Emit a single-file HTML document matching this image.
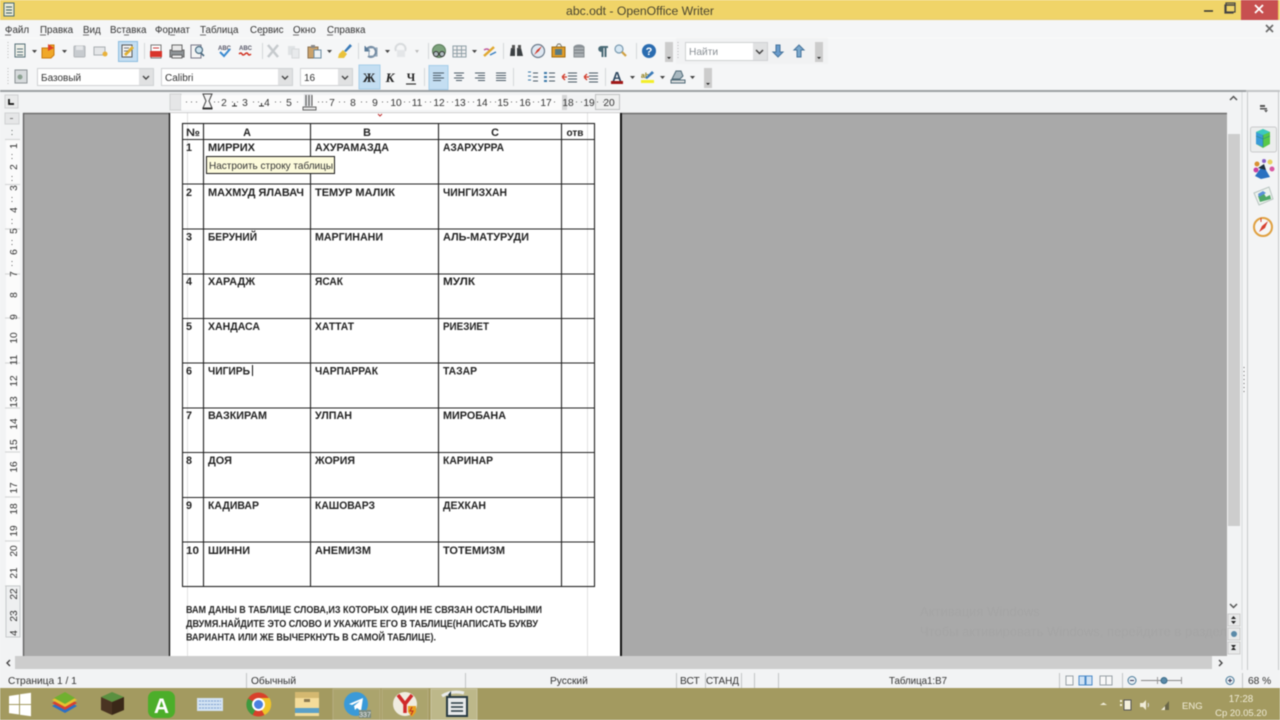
<!DOCTYPE html>
<html><head><meta charset="utf-8"><style>
html,body{margin:0;padding:0;width:1280px;height:720px;overflow:hidden;background:#f5f6f7;font-family:"Liberation Sans",sans-serif}
svg text{font-family:"Liberation Sans",sans-serif}
.a{position:absolute}
</style></head><body>
<svg class="a" style="left:0;top:0;filter:blur(.5px)" width="1280" height="720" viewBox="0 0 1280 720">
<!-- title bar -->
<rect width="1280" height="20" fill="#f0d468"/>
<rect y="19" width="1280" height="1" fill="#e8cd70"/>
<text x="640" y="15" font-size="12.2" text-anchor="middle" fill="#4a4530">abc.odt - OpenOffice Writer</text>
<g><rect x="4" y="3" width="10" height="13" fill="#e8ead8" stroke="#4a6a70"/><path d="M6 7h6M6 10h6M6 13h6" stroke="#3a5a60"/></g>
<path d="M1204 11h9" stroke="#333" stroke-width="1.5"/>
<rect x="1225" y="5" width="8" height="8" fill="none" stroke="#444" stroke-width="1.2"/><rect x="1226" y="3" width="9" height="9" fill="#f0d468" stroke="#444" stroke-width="1.2"/><path d="M1226 5h9" stroke="#444" stroke-width="1.5"/>
<rect x="1241" y="0" width="37" height="20" fill="#c75050"/>
<path d="M1255 5l8 8M1263 5l-8 8" stroke="#fff" stroke-width="1.8"/>
<!-- menu -->
<g font-size="9.8" fill="#333">
<text x="5" y="33">Файл</text><text x="40" y="33">Правка</text><text x="83" y="33">Вид</text><text x="110" y="33">Вставка</text><text x="155" y="33">Формат</text><text x="200" y="33">Таблица</text><text x="250" y="33">Сервис</text><text x="293" y="33">Окно</text><text x="327" y="33">Справка</text>
</g>
<path d="M5 35h6M40 35h6M83 35h6M124 35h5M170 35h5M200 35h6M260 35h5M293 35h6M327 35h6" stroke="#444" stroke-width=".7"/>
<path d="M1266 25l7 7M1273 25l-7 7" stroke="#666" stroke-width="1.6"/>
<path d="M0 38h1280" stroke="#fafafa"/>
<!-- toolbar 1 -->
<path d="M8 42v18M8 68v18" stroke="#bbb" stroke-dasharray="1 2"/>
<g>
<rect x="15" y="44" width="10" height="13" fill="#eef0e8" stroke="#56707a"/><path d="M17 49h6M17 52h6M17 55h6" stroke="#56707a"/>
<path d="M32 50h5l-2.500 3z" fill="#444"/>
<path d="M42 48h6l2-3h4v10l-3 3H42z" fill="#f0a828" stroke="#c97a10"/><path d="M48 44l6 4-6 3z" fill="#e0402a"/>
<path d="M62 50h5l-2.500 3z" fill="#444"/>
<rect x="74" y="46" width="11" height="11" rx="1" fill="#c7cbcf" stroke="#b0b4b8"/><rect x="76" y="46" width="7" height="4" fill="#e4e6e8"/>
<rect x="94" y="47" width="11" height="8" fill="#e4e6e8" stroke="#a8aeb2"/><circle cx="105" cy="54" r="2.500" fill="#e9b23c"/>
<rect x="118.500" y="41.500" width="19" height="20" fill="#c4def2" stroke="#8cbce0"/>
<rect x="122" y="45" width="10" height="12" fill="#f2f2f2" stroke="#555"/><path d="M124 54l8-8 2 2-8 8z" fill="#e0b030"/><path d="M124 48h5M124 51h4" stroke="#777"/>
<path d="M144.500 43v16M262.500 43v16M358.500 43v16M428.500 43v16M503.500 43v16M636.500 43v16" stroke="#d5d8da"/>
<rect x="151" y="45" width="10" height="13" fill="#fff" stroke="#777"/><rect x="150" y="51" width="12" height="6" fill="#d8342a"/><path d="M153 48h6" stroke="#c33"/>
<rect x="170" y="50" width="14" height="7" fill="#8d9396" stroke="#666"/><rect x="172" y="45" width="10" height="6" fill="#e8e8e8" stroke="#666"/><rect x="172" y="55" width="10" height="3" fill="#eee" stroke="#666"/>
<rect x="191" y="45" width="10" height="13" fill="#f4f4f4" stroke="#778"/><circle cx="199" cy="50" r="3.500" fill="#cde3ee" stroke="#4a6a80" stroke-width="1.200"/><path d="M201 53l3 3" stroke="#4a6a80" stroke-width="1.600"/>
<text x="218" y="50" font-size="6" font-weight="bold" fill="#556">ABC</text><path d="M220 52l4 4 6-7" fill="none" stroke="#3a8ad0" stroke-width="2"/>
<text x="239" y="50" font-size="6" font-weight="bold" fill="#556">ABC</text><path d="M239 54q2-2 3 0t3 0 3 0 3 0" fill="none" stroke="#d03020" stroke-width="1.500"/>
<path d="M268 45l10 12M278 45l-10 12" stroke="#c6cacd" stroke-width="2.500"/>
<rect x="288" y="46" width="7" height="9" fill="#dfe2e4"/><rect x="292" y="49" width="7" height="9" fill="#e8eaec" stroke="#d6d8da"/>
<rect x="308" y="47" width="10" height="11" fill="#caa26a" stroke="#8a7050"/><rect x="311" y="45" width="4" height="3" fill="#888"/><rect x="314" y="50" width="7" height="8" fill="#eef3f5" stroke="#6a8aa0"/>
<path d="M327 50h5l-2.500 3z" fill="#444"/>
<path d="M339 54l4-4 4 4-3 4q-4 0-6 0z" fill="#e9c23c"/><path d="M344 51l6-7 2 2-6 6z" fill="#3a7ab8"/>
<path d="M366 51a5 5 0 1 1 2 5" fill="none" stroke="#7088a0" stroke-width="2"/><path d="M365 46v5h5" fill="#5a7a98" stroke="#5a7a98"/><rect x="369" y="48" width="8" height="8" fill="none" stroke="#8aa0b4"/>
<path d="M385 50h5l-2.500 3z" fill="#444"/>
<path d="M396 51a5 5 0 1 1 9 0" fill="none" stroke="#d7dadc" stroke-width="2"/><rect x="397" y="50" width="8" height="7" fill="#e4e6e8"/>
<path d="M415 50h4l-2 3z" fill="#bbb"/>
<circle cx="439" cy="51" r="6.500" fill="#7ca27c" stroke="#5a7a5a"/><circle cx="436" cy="54" r="2.500" fill="#b0bcc0" stroke="#333"/><circle cx="442" cy="54" r="2.500" fill="#b0bcc0" stroke="#333"/>
<rect x="453" y="46" width="13" height="11" fill="#f0f0f0" stroke="#90a0a8"/><path d="M453 50h13M453 53.500h13M457 46v11M461.500 46v11" stroke="#90a0a8"/>
<path d="M472 50h5l-2.500 3z" fill="#444"/>
<path d="M484 56l10-9" stroke="#e0a830" stroke-width="2.500"/><path d="M484 50q3-2 5 0" stroke="#c05a9a" fill="none" stroke-width="1.500"/><path d="M490 55l6-3" stroke="#3a80c0" stroke-width="1.500"/>
<path d="M511 48h4v8h-5zM517 48h4l2 8h-6z" fill="#3a3f42"/><rect x="512" y="45" width="3" height="4" fill="#555"/><rect x="518" y="45" width="3" height="4" fill="#555"/>
<circle cx="538" cy="51" r="6.500" fill="#dfe8f2" stroke="#6a7a8a" stroke-width="1.200"/><path d="M534 55l3-5 5-4-3 5z" fill="#d03a2a"/>
<rect x="552" y="47" width="13" height="10" fill="#e09c28" stroke="#a06c10"/><rect x="555" y="49" width="7" height="6" fill="#5a7a80"/><path d="M556 47l2-3h2l2 3" fill="none" stroke="#776"/>
<ellipse cx="579" cy="46.500" rx="5" ry="2" fill="#8a9298"/><rect x="574" y="47" width="10" height="10" fill="#a8aeb2" stroke="#868c90"/><path d="M574 50h10M574 53h10" stroke="#7a8084"/>
<path d="M601 46h7v2h-1.500v9h-2v-9h-1v9h-2v-5a3 3 0 0 1 -.5-6z" fill="#4a6a76"/>
<circle cx="619" cy="49" r="4" fill="#d7e8f4" stroke="#7a9ab0" stroke-width="1.200"/><path d="M622 52l4 4" stroke="#d0a040" stroke-width="2.200"/>
<circle cx="649" cy="51" r="7" fill="#2a6cb0"/><text x="649" y="55" font-size="11" font-weight="bold" text-anchor="middle" fill="#fff">?</text>
</g>
<rect x="665" y="42" width="8" height="20" fill="#ccc"/><path d="M667 57h4l-2 2z" fill="#222"/>
<rect x="676" y="38" width="152" height="26" fill="#f1f2f3"/>
<path d="M678 42v18" stroke="#bbb" stroke-dasharray="1 2"/>
<rect x="685.500" y="42.500" width="82" height="18" fill="#fff" stroke="#cfd1d3"/>
<rect x="753" y="43" width="14" height="17" fill="#e0e1e2"/><path d="M756 50l3.500 3.500 3.500-3.500" fill="none" stroke="#444" stroke-width="1.500"/>
<text x="689" y="55" font-size="10.200" fill="#8a9095">Найти</text>
<path d="M778 57l-5-5h3v-7h4v7h3z" fill="#6a9ccc" stroke="#46749c"/>
<path d="M799 45l-5 5h3v7h4v-7h3z" fill="#7aa8cc" stroke="#46749c"/>
<rect x="815" y="42" width="8" height="20" fill="#ccc"/><path d="M817 57h4l-2 2z" fill="#222"/>
<!-- toolbar 2 -->
<rect x="15" y="70" width="12" height="13" fill="#d6dadc" stroke="#8a9094"/><circle cx="20" cy="77" r="2.500" fill="#8aa090"/>
<g fill="#fff" stroke="#cfd1d3">
<rect x="37.500" y="68.500" width="116" height="17"/><rect x="161.500" y="68.500" width="131" height="17"/><rect x="300.500" y="68.500" width="52" height="17"/></g>
<g fill="#e0e1e2"><rect x="139" y="69" width="14" height="16"/><rect x="278" y="69" width="14" height="16"/><rect x="338" y="69" width="14" height="16"/></g>
<path d="M143 76l3 3 3-3M282 76l3 3 3-3M342 76l3 3 3-3" fill="none" stroke="#444" stroke-width="1.400"/>
<g font-size="10" fill="#333"><text x="41" y="81">Базовый</text><text x="165" y="81">Calibri</text><text x="304" y="81">16</text></g>
<rect x="359" y="65" width="21" height="24" fill="#c4def2"/><rect x="359" y="65" width="21" height="24" fill="none" stroke="#a6cdea"/>
<text x="369" y="82" font-size="12.500" font-weight="bold" text-anchor="middle" style="font-family:'Liberation Serif',serif" fill="#222">Ж</text>
<text x="390" y="82" font-size="13" font-weight="bold" font-style="italic" text-anchor="middle" style="font-family:'Liberation Serif',serif" fill="#222">К</text>
<text x="411" y="81" font-size="11.500" font-weight="bold" text-anchor="middle" style="font-family:'Liberation Serif',serif" fill="#222">Ч</text>
<path d="M406 84h10" stroke="#333" stroke-width="1.200"/>
<path d="M424.500 68v18M513.500 68v18M605.500 68v18" stroke="#d5d8da"/>
<rect x="429" y="65.500" width="19" height="24" fill="#c4def2" stroke="#a6cdea"/>
<g stroke="#4a5a66"><path d="M433 73h11M433 75.500h8M433 78h11M433 80.500h8"/><path d="M454 73h10M456 75.500h6M454 78h10M456 80.500h6"/><path d="M475 73h10M478 75.500h7M475 78h10M478 80.500h7"/><path d="M496 73h10M496 75.500h10M496 78h10M496 80.500h10"/></g>
<g stroke="#4a5a66"><path d="M528 72h3M528 76h3M528 80h3" stroke="#3a78a8"/><path d="M533 73h5M533 77h5M533 81h5"/><path d="M544 73h3M544 77h3M544 81h3" stroke="#3a78a8" stroke-width="2"/><path d="M549 73h6M549 77h6M549 81h6"/><path d="M568 73h9M568 76h9M568 79h9M568 82h9"/><path d="M589 73h9M589 76h9M589 79h9M589 82h9"/></g>
<path d="M562 77h5M562 77l3-3M562 77l3 3M584 77h5M584 77l3-3M584 77l3 3" stroke="#d03a2a" fill="none" stroke-width="1.300"/>
<text x="617" y="81" font-size="13" font-weight="bold" text-anchor="middle" fill="#304a62">A</text><rect x="611" y="81" width="12" height="3" fill="#a01818"/>
<path d="M630 76h5l-2.500 3z" fill="#444"/>
<text x="641" y="78" font-size="7" font-weight="bold" fill="#8a7a10">ab</text><path d="M645 78l7-7 2 2-7 6z" fill="#3a7ab8"/><rect x="641" y="80" width="13" height="3" fill="#f3ee2a"/>
<path d="M660 76h5l-2.500 3z" fill="#444"/>
<path d="M672 79l4-8h5l2 5-3 3z" fill="#a8b8c0" stroke="#506a78"/><rect x="671" y="80" width="14" height="3" fill="#d8dcdc" stroke="#506a78"/>
<path d="M690 76h5l-2.500 3z" fill="#444"/>
<rect x="704" y="68" width="8" height="20" fill="#ccc"/><path d="M706 83h4l-2 2z" fill="#222"/>
<!-- separator above ruler -->
<rect y="90" width="1246" height="2" fill="#9ca0a3"/>
<rect x="1246" y="90" width="34" height="2" fill="#c2c4c6"/>
<!-- ruler area -->
<rect y="92" width="1246" height="21" fill="#f2f3f4"/>
<rect x="5" y="95" width="13" height="13" fill="#e9eaea" stroke="#cfd1d2"/>
<path d="M9 99v5h5" fill="none" stroke="#111" stroke-width="1.700"/>
<rect x="170" y="94" width="11" height="16" fill="#e5e6e7" stroke="#d0d2d3"/>
<rect x="181" y="95" width="383" height="15" fill="#fbfbfb"/>
<rect x="562" y="95" width="5" height="15" fill="#d4d5d6"/>
<rect x="595.500" y="94.500" width="24" height="15" fill="#eff0f0" stroke="#bfc1c2"/>
<rect x="304" y="94" width="8" height="16" fill="#dcdde0"/>
<g font-size="10.200" fill="#333" text-anchor="middle">
<text x="224" y="106">2</text><text x="245" y="106">3</text><text x="267" y="106">4</text><text x="289" y="106">5</text><text x="332" y="106">7</text><text x="353" y="106">8</text><text x="375" y="106">9</text><text x="396" y="106">10</text><text x="417" y="106">11</text><text x="439" y="106">12</text><text x="460" y="106">13</text><text x="482" y="106">14</text><text x="503" y="106">15</text><text x="525" y="106">16</text><text x="546" y="106">17</text><text x="568" y="106">18</text><text x="589" y="106">19</text><text x="609" y="106">20</text>
</g>
<path d="M186 102h1M191 102h1M196 102h1M214 102h1M218 102h1M232 102h1M237 102h1M253 102h1M258 102h1M275 102h1M280 102h1M297 102h1M318 102h1M322 102h1M326 102h1M339 102h1M344 102h1M361 102h1M366 102h1M382 102h1M387 102h1M404 102h1M409 102h1M425 102h1M430 102h1M447 102h1M452 102h1M468 102h1M473 102h1M490 102h1M495 102h1M511 102h1M516 102h1M533 102h1M538 102h1M554 102h1M576 102h1M581 102h1M597 102h1M603 102h1" stroke="#666"/>
<path d="M203 94h9l-3 7 3 7h-9l3-7z" fill="#f5f5f5" stroke="#444"/>
<path d="M202.500 108.500h10" stroke="#333" stroke-width="2"/>
<path d="M232 106h5M259 106h5" stroke="#333"/><path d="M234.500 103v3M261.500 103v3" stroke="#333"/>
<path d="M306 95v11M309 95v11M312 95v11" stroke="#555"/><path d="M303 107h13v3h-13z" fill="#e8e8e8" stroke="#666"/>
<!-- vertical ruler -->
<rect y="113" width="23" height="543" fill="#f2f3f4"/>
<rect x="5" y="113" width="14" height="11" fill="#e5e6e7" stroke="#cfd1d2"/><path d="M10 118.500h3" stroke="#777"/>
<rect x="6" y="140" width="14" height="497" fill="#fbfbfb"/>
<path d="M5 139.500h15M5 184.500h15M5 229h15M5 274h15M5 318h15M5 363h15M5 408h15M5 452h15M5 497h15M5 541h15M5 586h15" stroke="#d6d7d8" stroke-width="1.200"/>
<rect x="6" y="586" width="14" height="51" fill="#eeeff0" stroke="#c8cacb"/>
<g font-size="10.200" fill="#333" text-anchor="middle">
<text transform="translate(17,146) rotate(-90)">1</text><text transform="translate(17,167) rotate(-90)">2</text><text transform="translate(17,188) rotate(-90)">3</text><text transform="translate(17,210) rotate(-90)">4</text><text transform="translate(17,231) rotate(-90)">5</text><text transform="translate(17,252) rotate(-90)">6</text><text transform="translate(17,274) rotate(-90)">7</text><text transform="translate(17,295) rotate(-90)">8</text><text transform="translate(17,317) rotate(-90)">9</text><text transform="translate(17,338) rotate(-90)">10</text><text transform="translate(17,360) rotate(-90)">11</text><text transform="translate(17,381) rotate(-90)">12</text><text transform="translate(17,402) rotate(-90)">13</text><text transform="translate(17,424) rotate(-90)">14</text><text transform="translate(17,445) rotate(-90)">15</text><text transform="translate(17,467) rotate(-90)">16</text><text transform="translate(17,488) rotate(-90)">17</text><text transform="translate(17,509) rotate(-90)">18</text><text transform="translate(17,531) rotate(-90)">19</text><text transform="translate(17,551) rotate(-90)">20</text><text transform="translate(17,573) rotate(-90)">21</text><text transform="translate(17,594) rotate(-90)">22</text><text transform="translate(17,616) rotate(-90)">23</text><text transform="translate(17,633) rotate(-90)">4</text>
</g>
<path d="M12 130v1M12 134v1M12 154v1M12 158v1M12 176v1M12 180v1M12 197v1M12 201v1M12 219v1M12 223v1M12 240v1M12 244v1M12 261v1M12 265v1" stroke="#666"/>
<!-- doc bg -->
<rect x="23" y="113" width="1204" height="543" fill="#a9a9a9"/>
<path d="M23 113.500h1204" stroke="#6f6f6f" stroke-width="1.500"/><path d="M23.500 113v543" stroke="#5f5f5f" stroke-width="1.300"/>
<rect x="170" y="113" width="451" height="543" fill="#fff"/>
<path d="M169.500 113v543" stroke="#111" stroke-width="1.300"/>
<rect x="620" y="113" width="2" height="543" fill="#111"/>
<path d="M187.500 113v543M587.500 113v543" stroke="#e2e2e2"/>
<path d="M378 114l2 2 2-2" stroke="#c03030" fill="none"/>
<!-- faint watermark -->
<g fill="#a5a5a5" font-size="13"><text x="920" y="616">Активация Windows</text><text x="920" y="636">Чтобы активировать Windows, перейдите в раздел</text></g>
<!-- table -->
<g stroke="#222" stroke-width="1.100" fill="none">
<rect x="182.500" y="123.500" width="412" height="463"/>
<path d="M182 139.500h413M182 184h413M182 229h413M182 274h413M182 318.500h413M182 363h413M182 408h413M182 452.500h413M182 497.500h413M182 542h413"/>
<path d="M203.500 123v463M310.500 123v463M438.500 123v463M561.500 123v463"/>
</g>
<g font-size="10.800" font-weight="bold" fill="#242424">
<text x="186" y="136" textLength="14" lengthAdjust="spacingAndGlyphs">№</text>
<text x="247" y="136" text-anchor="middle">А</text><text x="367" y="136" text-anchor="middle">В</text><text x="495" y="136" text-anchor="middle">С</text><text x="575" y="136" text-anchor="middle" font-size="10">отв</text>
<text x="186" y="151">1</text><text x="208" y="151" textLength="47" lengthAdjust="spacingAndGlyphs">МИРРИХ</text><text x="315" y="151" textLength="74" lengthAdjust="spacingAndGlyphs">АХУРАМАЗДА</text><text x="443" y="151" textLength="61" lengthAdjust="spacingAndGlyphs">АЗАРХУРРА</text>
<text x="186" y="196">2</text><text x="208" y="196" textLength="96" lengthAdjust="spacingAndGlyphs">МАХМУД ЯЛАВАЧ</text><text x="315" y="196" textLength="80" lengthAdjust="spacingAndGlyphs">ТЕМУР МАЛИК</text><text x="443" y="196" textLength="64" lengthAdjust="spacingAndGlyphs">ЧИНГИЗХАН</text>
<text x="186" y="240.500">3</text><text x="208" y="240.500" textLength="49" lengthAdjust="spacingAndGlyphs">БЕРУНИЙ</text><text x="315" y="240.500" textLength="68" lengthAdjust="spacingAndGlyphs">МАРГИНАНИ</text><text x="443" y="240.500" textLength="86" lengthAdjust="spacingAndGlyphs">АЛЬ-МАТУРУДИ</text>
<text x="186" y="285">4</text><text x="208" y="285" textLength="47" lengthAdjust="spacingAndGlyphs">ХАРАДЖ</text><text x="315" y="285" textLength="28" lengthAdjust="spacingAndGlyphs">ЯСАК</text><text x="443" y="285" textLength="32" lengthAdjust="spacingAndGlyphs">МУЛК</text>
<text x="186" y="330">5</text><text x="208" y="330" textLength="52" lengthAdjust="spacingAndGlyphs">ХАНДАСА</text><text x="315" y="330" textLength="39" lengthAdjust="spacingAndGlyphs">ХАТТАТ</text><text x="443" y="330" textLength="46" lengthAdjust="spacingAndGlyphs">РИЕЗИЕТ</text>
<text x="186" y="374.500">6</text><text x="208" y="374.500" textLength="42" lengthAdjust="spacingAndGlyphs">ЧИГИРЬ</text><text x="315" y="374.500" textLength="63" lengthAdjust="spacingAndGlyphs">ЧАРПАРРАК</text><text x="443" y="374.500" textLength="34" lengthAdjust="spacingAndGlyphs">ТАЗАР</text>
<text x="186" y="419">7</text><text x="208" y="419" textLength="59" lengthAdjust="spacingAndGlyphs">ВАЗКИРАМ</text><text x="315" y="419" textLength="37" lengthAdjust="spacingAndGlyphs">УЛПАН</text><text x="443" y="419" textLength="63" lengthAdjust="spacingAndGlyphs">МИРОБАНА</text>
<text x="186" y="464">8</text><text x="208" y="464" textLength="24" lengthAdjust="spacingAndGlyphs">ДОЯ</text><text x="315" y="464" textLength="40" lengthAdjust="spacingAndGlyphs">ЖОРИЯ</text><text x="443" y="464" textLength="50" lengthAdjust="spacingAndGlyphs">КАРИНАР</text>
<text x="186" y="509">9</text><text x="208" y="509" textLength="51" lengthAdjust="spacingAndGlyphs">КАДИВАР</text><text x="315" y="509" textLength="60" lengthAdjust="spacingAndGlyphs">КАШОВАРЗ</text><text x="443" y="509" textLength="43" lengthAdjust="spacingAndGlyphs">ДЕХКАН</text>
<text x="186" y="554" textLength="13" lengthAdjust="spacingAndGlyphs">10</text><text x="208" y="554" textLength="42" lengthAdjust="spacingAndGlyphs">ШИННИ</text><text x="315" y="554" textLength="56" lengthAdjust="spacingAndGlyphs">АНЕМИЗМ</text><text x="443" y="554" textLength="62" lengthAdjust="spacingAndGlyphs">ТОТЕМИЗМ</text>
<text x="186" y="613" font-size="10" textLength="356" lengthAdjust="spacingAndGlyphs">ВАМ ДАНЫ В ТАБЛИЦЕ СЛОВА,ИЗ КОТОРЫХ ОДИН НЕ СВЯЗАН ОСТАЛЬНЫМИ</text>
<text x="186" y="627" font-size="10" textLength="352" lengthAdjust="spacingAndGlyphs">ДВУМЯ.НАЙДИТЕ ЭТО СЛОВО И УКАЖИТЕ ЕГО В ТАБЛИЦЕ(НАПИСАТЬ БУКВУ</text>
<text x="186" y="640.500" font-size="10" textLength="250" lengthAdjust="spacingAndGlyphs">ВАРИАНТА ИЛИ ЖЕ ВЫЧЕРКНУТЬ В САМОЙ ТАБЛИЦЕ).</text>
</g>
<path d="M252.500 365v11" stroke="#111"/>
<!-- tooltip -->
<rect x="206.500" y="156.500" width="128" height="17" fill="#fdfbdc" stroke="#1a1a1a"/>
<text x="209" y="169" font-size="10.500" fill="#333" textLength="124" lengthAdjust="spacingAndGlyphs">Настроить строку таблицы</text>
<!-- scrollbars -->
<rect x="1227" y="113" width="14" height="543" fill="#f2f3f4"/>
<rect x="1228" y="134" width="12" height="392" fill="#cdcdcd"/>
<path d="M1230 100l3.500-3.500 3.500 3.500" fill="none" stroke="#555" stroke-width="1.500"/>
<path d="M1230 604l3.500 3.500 3.500-3.500" fill="none" stroke="#555" stroke-width="1.500"/>
<rect x="1228" y="614" width="12" height="12" fill="#e8e9ea" stroke="#ccc"/><path d="M1231 619h5l-2.500-3zM1231 621h5l-2.500 3z" fill="#222"/>
<rect x="1228" y="628" width="12" height="12" fill="#e8e9ea" stroke="#ccc"/><circle cx="1234" cy="634" r="3" fill="#5a8aa8"/>
<rect x="1228" y="642" width="12" height="12" fill="#e8e9ea" stroke="#ccc"/><path d="M1231 645h5l-2.500 3zM1231 650h5l-2.500-3z" fill="#222"/>
<rect y="656" width="1241" height="14" fill="#f2f3f4"/>
<rect x="15" y="656" width="1197" height="13" fill="#cdcdcd"/>
<path d="M10 660l-3 3 3 3M1219 660l3 3-3 3" fill="none" stroke="#444" stroke-width="1.400"/>
<!-- right sidebar -->
<rect x="1241" y="92" width="39" height="578" fill="#f3f4f5"/>
<path d="M1247.500 92v578M1278.500 92v578" stroke="#c7c9cb"/><path d="M1242 92v578" stroke="#d8dadb"/>
<path d="M1260 105h5v2h-5zM1260 108h7v1.500h-7zM1264 110h4l-2 2.500z" fill="#555"/>
<rect x="1250.500" y="127" width="26" height="25" rx="2" fill="#eceded" stroke="#c9cbcc"/>
<path d="M1256 132l7-3 7 3v12l-7 4-7-4z" fill="#58c848"/><path d="M1256 132l7 3v12l-7-3z" fill="#3a9ad8"/><path d="M1263 129l7 3-7 3-7-3z" fill="#3cc8c0"/><path d="M1256 136l7 3M1263 135v12M1270 136l-7 3" stroke="#2a8a80" stroke-width=".6" fill="none"/>
<path d="M1255 176l8-11 7 12-9 2z" fill="#2a70c0"/><circle cx="1257" cy="164" r="2.500" fill="#d89030"/><circle cx="1270" cy="162" r="2.500" fill="#e8d060"/><circle cx="1272" cy="169" r="2.500" fill="#d858a0"/><circle cx="1256" cy="170" r="2.500" fill="#c840a0"/><circle cx="1264" cy="161" r="2" fill="#8860c8"/><path d="M1258 168l6-4 2 6z" fill="#203040"/>
<path d="M1254 193l15-6 4 12-14 6z" fill="#eef2ee" stroke="#b8c4c0"/><path d="M1258 196l5-4 3 5 4-2 1 4-11 3z" fill="#50a868"/><path d="M1258 194l5-3 3 2-7 4z" fill="#5a90d8"/>
<circle cx="1263" cy="227" r="9" fill="#f6f6f6" stroke="#e0a040" stroke-width="2"/><path d="M1259 232l3-6 6-5-3 7z" fill="#d84030"/><path d="M1261 218v4" stroke="#d84030"/>
<path d="M1244 367v1M1244 371v1M1244 375v1M1244 379v1M1244 383v1M1244 387v1M1244 391v1" stroke="#666"/>
<!-- status bar -->
<rect y="670" width="1280" height="18" fill="#f2f3f4"/>
<g font-size="10.200" fill="#333">
<text x="8" y="684">Страница  1 / 1</text><text x="251" y="684">Обычный</text><text x="550" y="684">Русский</text><text x="680" y="684">ВСТ</text><text x="706" y="684" textLength="33" lengthAdjust="spacingAndGlyphs">СТАНД</text><text x="889" y="684" textLength="58" lengthAdjust="spacingAndGlyphs">Таблица1:B7</text><text x="1248" y="684">68 %</text>
</g>
<path d="M246.500 673v15M465.500 673v15M676.500 673v15M705.500 673v15M741.500 673v15M754.500 673v15M778.500 673v15M1059.500 673v15M1122.500 673v15M1242.500 673v15" stroke="#c2c4c6"/>
<rect x="1066" y="676" width="7" height="9" fill="#f8f8f8" stroke="#98a0a6"/>
<rect x="1079" y="676" width="6" height="9" fill="#cfe2f4" stroke="#4a8ac8"/><rect x="1086" y="676" width="6" height="9" fill="#cfe2f4" stroke="#4a8ac8"/>
<rect x="1100" y="676" width="6" height="9" fill="#f8f8f8" stroke="#98a0a6"/><rect x="1106" y="676" width="6" height="9" fill="#f8f8f8" stroke="#98a0a6"/>
<circle cx="1132" cy="680.500" r="4" fill="#e8eef2" stroke="#4a7a9a"/><path d="M1130 680.500h4" stroke="#335"/>
<path d="M1141 680.500h41" stroke="#888"/><path d="M1157.500 677v7M1181.500 677v7" stroke="#999"/>
<circle cx="1164" cy="680.500" r="3" fill="#5a8aa8" stroke="#3a6a88"/>
<circle cx="1230" cy="680.500" r="4" fill="#e8eef2" stroke="#4a7a9a"/><path d="M1228 680.500h4M1230 678.500v4" stroke="#335"/>
<!-- taskbar -->
<rect y="688" width="1280" height="32" fill="#a39a60"/>
<rect x="333" y="689" width="47" height="31" fill="#aba46d" stroke="#b6ad80"/>
<rect x="382" y="689" width="46" height="31" fill="#aba46d" stroke="#b6ad80"/>
<rect x="431" y="689" width="46" height="31" fill="#bdb88a" stroke="#c8c4a0"/>
<path d="M9 696l10-1.500v9.500H9zM20 694.300l11-1.600v11.300H20zM9 705h10v9.500l-10-1.400zM20 705h11v11.300l-11-1.600z" fill="#fff"/>
<path d="M52 706l13-7 12 7-12 7z" fill="#2a70c8"/><path d="M52 703l13-7 12 7-12 7z" fill="#d84030"/><path d="M52 700l13-7 12 7-12 7z" fill="#e8c030"/><path d="M54 698l11-6 10 6-10 6z" fill="#70b030"/>
<path d="M101 697l11-5 12 5-12 5z" fill="#5a9040"/><path d="M101 697l11 5v13l-11-5z" fill="#4a3422"/><path d="M124 697l-12 5v13l12-5z" fill="#3a2818"/>
<rect x="148" y="691" width="27" height="27" rx="7" fill="#4cae2a"/><text x="161.500" y="713" font-size="21" font-weight="bold" text-anchor="middle" fill="#fff">A</text>
<rect x="197" y="698" width="26" height="13" fill="#d2e2f2"/><path d="M199 701h22M199 704.500h22M199 708h22" stroke="#7e9ed0" stroke-dasharray="2 1"/>
<circle cx="258.500" cy="704.500" r="12" fill="#d8402a"/><path d="M258.500 704.500L248 698.500a12 12 0 0 0 4.500 16.500z" fill="#3f9a3f"/><path d="M258.500 704.500l6 10.500a12 12 0 0 0 5-17h-11z" fill="#eec42a"/><circle cx="258.500" cy="704.500" r="5.500" fill="#4a80e0" stroke="#fff" stroke-width="2"/>
<rect x="295" y="692" width="24" height="8" fill="#d4b870"/><rect x="295" y="698" width="24" height="18" fill="#f4dc9a"/><rect x="295" y="708" width="24" height="5" fill="#5aa0c8"/><rect x="304" y="699" width="6" height="3" fill="#8a7a50"/>
<circle cx="356" cy="704" r="12" fill="#3a9ad8"/><path d="M349 704l14-6-2 13-4-3-2 2-1-4 6-5-8 4z" fill="#fff"/><rect x="359" y="710" width="12" height="8" fill="#7a8a80"/><text x="365" y="717" font-size="7" text-anchor="middle" fill="#eee">337</text>
<circle cx="405" cy="704" r="12" fill="#f0ece0"/><path d="M398 695l7 9 7-9M405 704v9" fill="none" stroke="#d02a2a" stroke-width="3.500"/><path d="M408 706h8v6l-4 5-4-5z" fill="#e8a020"/><path d="M412 707l-2 4h3l-2 4" fill="none" stroke="#c02a20"/>
<rect x="447" y="697" width="20" height="19" fill="#e8eaea" stroke="#283a42" stroke-width="2"/><path d="M451 703h12M451 707h12M451 711h12" stroke="#283a42" stroke-width="1.500"/><path d="M442 696q10-6 22-3" fill="none" stroke="#e8eaea" stroke-width="3"/><path d="M448 695l3-4v7z" fill="#283a42"/>
<path d="M1100 705h7l-3.500-2.500z" fill="#f0ecd8"/>
<rect x="1124" y="700" width="7" height="10" fill="#f4f0dc" stroke="#555"/><rect x="1120" y="700" width="2" height="2" fill="#f4f0dc"/><rect x="1120" y="704" width="2" height="2" fill="#f4f0dc"/>
<path d="M1140 703h3l3-3v10l-3-3h-3z" fill="#f0ecd8"/><path d="M1148 703q1 2 0 4" stroke="#ddd" fill="none"/>
<path d="M1161 710l8-9v9z" fill="#6a6748"/><path d="M1161 710l4-4v4z" fill="#f0ecd8"/>
<g fill="#f0ecd8"><text x="1182" y="709" font-size="9.500">ENG</text><text x="1241" y="702" font-size="9.800" text-anchor="middle">17:28</text><text x="1241" y="716" font-size="9.500" text-anchor="middle">Ср 20.05.20</text></g>
</svg>
</body></html>
